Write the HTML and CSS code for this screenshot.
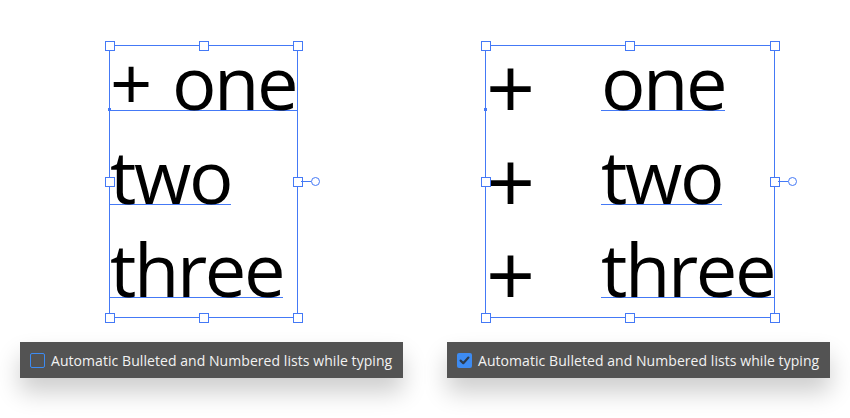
FILE: index.html
```html
<!DOCTYPE html>
<html lang="en">
<head>
<meta charset="utf-8">
<title>Automatic bulleted lists</title>
<link rel="stylesheet" href="styles.css">
</head>
<body>
<div class="stage">
  <section class="panel">
    <div class="frame frame-left">
      <div class="lines">
        <div class="row row-first"><span class="word">+</span><span class="word gap">one</span></div>
        <div class="row"><span class="word under">two</span></div>
        <div class="row"><span class="word under">three</span></div>
      </div>
      <span class="anchor"></span>
      <span class="handle tl"></span><span class="handle tm"></span><span class="handle tr"></span>
      <span class="handle ml"></span><span class="handle mr"></span>
      <span class="handle bl"></span><span class="handle bm"></span><span class="handle br"></span>
      <span class="port"><span class="port-line"></span><span class="port-dot"></span></span>
    </div>
    <div class="bar">
      <span class="check"></span>
      <span class="label">Automatic Bulleted and Numbered lists while typing</span>
    </div>
  </section>
  <section class="panel">
    <div class="frame frame-right">
      <div class="lines">
        <div class="row"><span class="bullet">+</span><span class="word under">one</span></div>
        <div class="row"><span class="bullet">+</span><span class="word under">two</span></div>
        <div class="row"><span class="bullet">+</span><span class="word under last">three</span></div>
      </div>
      <span class="anchor"></span>
      <span class="handle tl"></span><span class="handle tm"></span><span class="handle tr"></span>
      <span class="handle ml"></span><span class="handle mr"></span>
      <span class="handle bl"></span><span class="handle bm"></span><span class="handle br"></span>
      <span class="port"><span class="port-line"></span><span class="port-dot"></span></span>
    </div>
    <div class="bar">
      <span class="check checked"><svg viewBox="0 0 15 15" width="15" height="15"><path d="M3.6 7.6 L6.3 10.2 L11.4 4.6" fill="none" stroke="#2c3b4d" stroke-width="2.2" stroke-linecap="round" stroke-linejoin="round"/></svg></span>
      <span class="label">Automatic Bulleted and Numbered lists while typing</span>
    </div>
  </section>
</div>
</body>
</html>
```
FILE: styles.css
```css
* { box-sizing: border-box; }
html, body { margin: 0; background: #ffffff; }
body { width: 850px; height: 418px; overflow: hidden; }

.stage {
  display: flex;
  gap: 44px;
  padding-left: 20px;
}

.panel {
  display: flex;
  flex-direction: column;
  width: 383px;
}

.frame {
  position: relative;
  margin-top: 45px;
  height: 273px;
  border: 1px solid #4479f6;
}
.frame-left { margin-left: 89px; width: 189px; }
.frame-right { margin-left: 38px; width: 290px; }

.lines {
  display: grid;
  grid-template-rows: 65px 94px 93px;
  font-family: "Open Sans", "Noto Sans", sans-serif;
  font-size: 74px;
  color: #000;
}

.row {
  display: flex;
  align-items: flex-end;
}
.row-first { border-bottom: 1px solid #4479f6; }

.word {
  line-height: 0.776;
  letter-spacing: -2.4px;
  white-space: pre;
}
.word.gap { margin-left: 22px; }
.word.under { border-bottom: 1px solid #4479f6; }
.frame-right .word.last { flex: 1; }

.bullet {
  flex: 0 0 115px;
  font-size: 86px;
  line-height: 0.776;
  margin-bottom: -10px;
}

.anchor {
  position: absolute;
  left: -2px;
  top: 62px;
  width: 3px;
  height: 3px;
  background: #4479f6;
}

.handle {
  position: absolute;
  width: 10px;
  height: 10px;
  background: #fff;
  border: 1.5px solid #4479f6;
}
.tl { left: -5.5px; top: -5.5px; }
.tm { left: calc(50% - 5px); top: -5.5px; }
.tr { right: -5.5px; top: -5.5px; }
.ml { left: -5.5px; top: calc(50% - 5px); }
.mr { right: -5.5px; top: calc(50% - 5px); }
.bl { left: -5.5px; bottom: -5.5px; }
.bm { left: calc(50% - 5px); bottom: -5.5px; }
.br { right: -5.5px; bottom: -5.5px; }

.port {
  position: absolute;
  right: -23px;
  top: calc(50% - 4.5px);
  display: flex;
  align-items: center;
  height: 9px;
}
.port-line {
  width: 10px;
  height: 1px;
  background: #4479f6;
}
.port-dot {
  width: 9px;
  height: 9px;
  border: 1.2px solid #4479f6;
  border-radius: 50%;
  background: #fff;
}

.bar {
  margin-top: 24px;
  height: 36px;
  background: #535353;
  display: flex;
  align-items: center;
  padding-left: 10px;
  gap: 6px;
  box-shadow: 0 14px 24px rgba(0, 0, 0, 0.2);
}

.check {
  flex: 0 0 15px;
  width: 15px;
  height: 15px;
  border: 1.5px solid #3d8bf2;
  border-radius: 2px;
  display: flex;
  align-items: center;
  justify-content: center;
}
.check.checked {
  background: #3d8bf2;
  border: none;
}
.check svg { display: block; }

.label {
  font-family: "Open Sans", "Noto Sans", sans-serif;
  font-size: 14px;
  letter-spacing: 0.06px;
  color: #f2f2f2;
  white-space: nowrap;
}
```
